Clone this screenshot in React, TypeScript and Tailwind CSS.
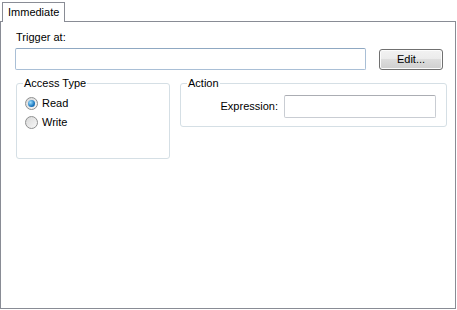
import React from "react";

const Radio = ({ checked }: { checked?: boolean }) => (
    <span className="flex size-[13px] items-center justify-center rounded-full border border-[#8e8f8f] bg-[linear-gradient(135deg,#d8d8d8,#f8f8f8)] flex-shrink-0">
        {checked && (
            <span className="size-[7px] rounded-full bg-[radial-gradient(circle_at_35%_35%,#9fe0ff,#1d79c0_60%,#0d4f8c)]" />
        )}
    </span>
);

export default function App() {
    return (
        <div className="w-[457px] h-[310px] bg-white text-[11px] leading-none text-black font-['Liberation_Sans',Arial,sans-serif]">
            {/* TAB STRIP */}
            <div className="flex pt-[2px] pl-[2px]">
                <div className="relative z-10 -mb-px h-[20px] w-[63px] border border-b-0 border-[#898c95] bg-white pl-[5px] pt-[4px]">
                    Immediate
                </div>
            </div>

            {/* TAB PAGE */}
            <div className="flex h-[288px] w-[456px] flex-col border border-[#898c95] bg-white">
                <div className="ml-[15px] mt-[10px]">Trigger at:</div>

                <div className="mt-[5px] flex items-start">
                    <div className="ml-[14px] h-[22px] w-[351px] rounded-[2px] border border-[#a9bfd6] border-t-[#8fa8c2] bg-white" />
                    <button className="ml-[13px] mt-[1px] h-[21px] w-[64px] rounded-[3px] border border-[#707070] bg-[linear-gradient(#f2f2f2,#ebebeb_50%,#dddddd_50%,#cfcfcf)] text-[11px] text-black shadow-[inset_0_0_0_1px_#fcfcfc]">
                        Edit...
                    </button>
                </div>

                <div className="mt-[8px] flex items-start">
                    <fieldset className="ml-[15px] h-[81px] w-[154px] rounded-[3px] border border-[#d5dfe5]">
                        <legend className="ml-[6px] px-[1px]">Access Type</legend>
                        <label className="ml-[8px] mt-[8px] flex items-center gap-[4px]">
                            <Radio checked />
                            <span>Read</span>
                        </label>
                        <label className="ml-[8px] mt-[6px] flex items-center gap-[4px]">
                            <Radio />
                            <span>Write</span>
                        </label>
                    </fieldset>

                    <fieldset className="ml-[10px] h-[49px] w-[267px] rounded-[3px] border border-[#d5dfe5]">
                        <legend className="ml-[6px] px-[1px]">Action</legend>
                        <div className="mt-[6px] flex items-center justify-end pr-[10px]">
                            <span className="mr-[6px]">Expression:</span>
                            <div className="h-[23px] w-[152px] rounded-[2px] border border-[#c9cdd3] border-t-[#abadb3] bg-white" />
                        </div>
                    </fieldset>
                </div>
            </div>
        </div>
    );
}
